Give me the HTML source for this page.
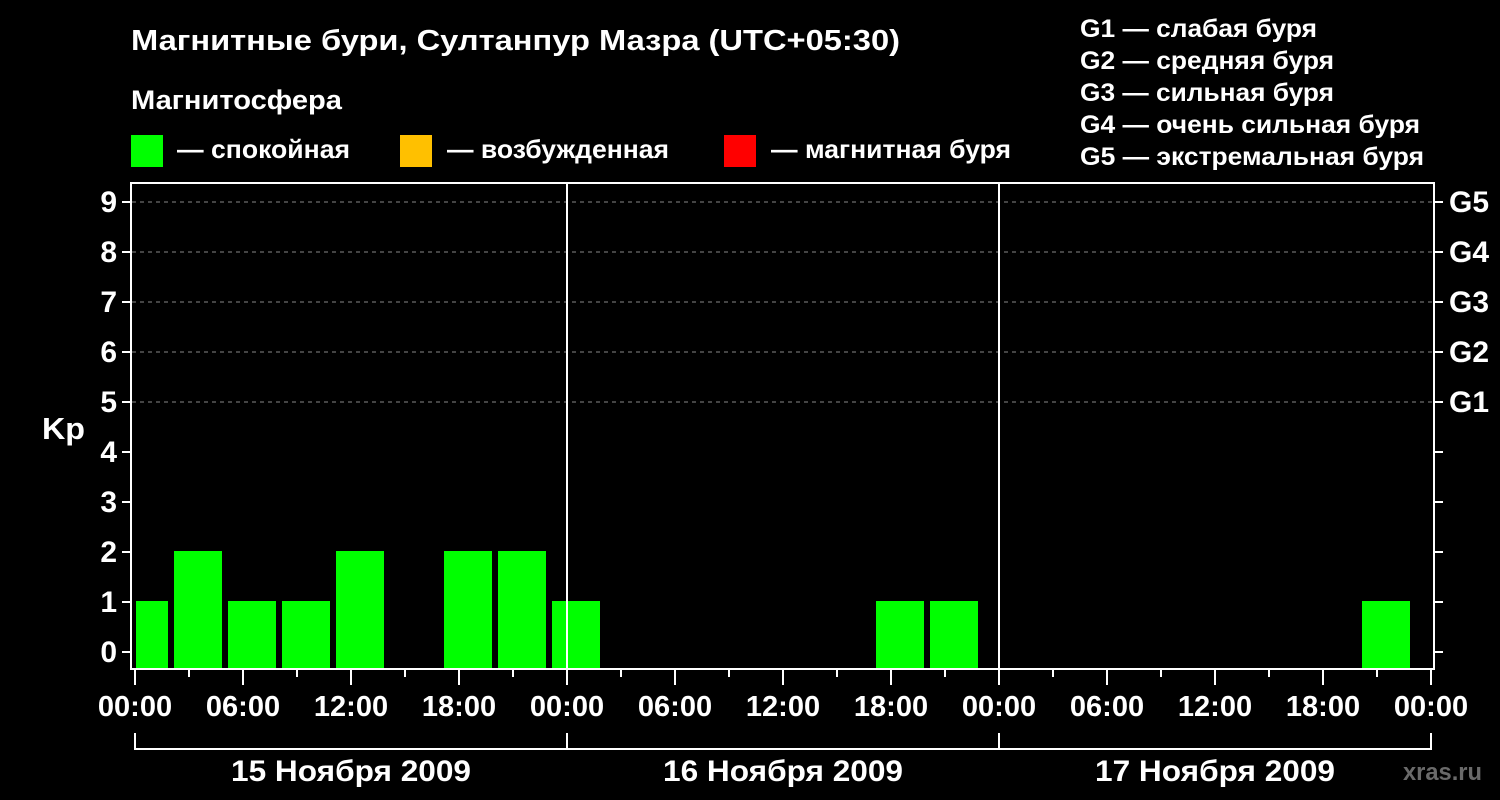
<!DOCTYPE html>
<html><head><meta charset="utf-8"><style>
html,body{margin:0;padding:0;background:#000;}
svg{display:block;}
text{font-family:"Liberation Sans",sans-serif;font-weight:bold;fill:#fff;}
</style></head><body>
<svg width="1500" height="800" xmlns="http://www.w3.org/2000/svg">
<rect width="1500" height="800" fill="#000"/>
<text x="131" y="50" font-size="29" textLength="769" lengthAdjust="spacingAndGlyphs">Магнитные бури, Султанпур Мазра (UTC+05:30)</text>
<text x="131" y="109" font-size="27" textLength="211" lengthAdjust="spacingAndGlyphs">Магнитосфера</text>
<rect x="131" y="135" width="32" height="32" fill="#00ff00"/>
<text x="177" y="158" font-size="26" textLength="173" lengthAdjust="spacingAndGlyphs">— спокойная</text>
<rect x="400" y="135" width="32" height="32" fill="#ffc000"/>
<text x="447" y="158" font-size="26" textLength="222" lengthAdjust="spacingAndGlyphs">— возбужденная</text>
<rect x="724" y="135" width="32" height="32" fill="#ff0000"/>
<text x="771" y="158" font-size="26" textLength="240" lengthAdjust="spacingAndGlyphs">— магнитная буря</text>
<g font-size="25">
<text x="1080" y="37" textLength="237" lengthAdjust="spacingAndGlyphs">G1 — слабая буря</text>
<text x="1080" y="69" textLength="254" lengthAdjust="spacingAndGlyphs">G2 — средняя буря</text>
<text x="1080" y="101" textLength="254" lengthAdjust="spacingAndGlyphs">G3 — сильная буря</text>
<text x="1080" y="133" textLength="340" lengthAdjust="spacingAndGlyphs">G4 — очень сильная буря</text>
<text x="1080" y="165" textLength="344" lengthAdjust="spacingAndGlyphs">G5 — экстремальная буря</text>
</g>
<g stroke="#888" stroke-width="1" stroke-dasharray="4,4">
<line x1="132" y1="202" x2="1432" y2="202"/><line x1="132" y1="252" x2="1432" y2="252"/>
<line x1="132" y1="302" x2="1432" y2="302"/><line x1="132" y1="352" x2="1432" y2="352"/>
<line x1="132" y1="402" x2="1432" y2="402"/>
</g>
<g fill="#00ff00">
<rect x="136" y="601" width="32" height="67"/>
<rect x="174" y="551" width="48" height="117"/>
<rect x="228" y="601" width="48" height="67"/>
<rect x="282" y="601" width="48" height="67"/>
<rect x="336" y="551" width="48" height="117"/>
<rect x="444" y="551" width="48" height="117"/>
<rect x="498" y="551" width="48" height="117"/>
<rect x="552" y="601" width="48" height="67"/>
<rect x="876" y="601" width="48" height="67"/>
<rect x="930" y="601" width="48" height="67"/>
<rect x="1362" y="601" width="48" height="67"/>
</g>
<g stroke="#fff" stroke-width="2" fill="none">
<path d="M131,183 H1434 V669 H131 Z"/>
<line x1="567" y1="183" x2="567" y2="669"/><line x1="999" y1="183" x2="999" y2="669"/>
<path d="M122,202h9M122,252h9M122,302h9M122,352h9M122,402h9M122,452h9M122,502h9M122,552h9M122,602h9M122,652h9"/>
<path d="M1434,202h9M1434,252h9M1434,302h9M1434,352h9M1434,402h9M1434,452h9M1434,502h9M1434,552h9M1434,602h9M1434,652h9"/>
<path d="M135,669v16M189,669v8M243,669v16M297,669v8M351,669v16M405,669v8M459,669v16M513,669v8M567,669v16M621,669v8M675,669v16M729,669v8M783,669v16M837,669v8M891,669v16M945,669v8M999,669v16M1053,669v8M1107,669v16M1161,669v8M1215,669v16M1269,669v8M1323,669v16M1377,669v8M1431,669v16"/>
<path d="M135,733V749H1431V733M567,733V749M999,733V749"/>
</g>
<g font-size="30" text-anchor="end">
<text x="117" y="212">9</text><text x="117" y="262">8</text><text x="117" y="312">7</text>
<text x="117" y="362">6</text><text x="117" y="412">5</text><text x="117" y="462">4</text>
<text x="117" y="512">3</text><text x="117" y="562">2</text><text x="117" y="612">1</text>
<text x="117" y="662">0</text>
</g>
<text x="42" y="439" font-size="31" textLength="43" lengthAdjust="spacingAndGlyphs">Kp</text>
<g font-size="30">
<text x="1449" y="212">G5</text><text x="1449" y="262">G4</text><text x="1449" y="312">G3</text>
<text x="1449" y="362">G2</text><text x="1449" y="412">G1</text>
</g>
<g font-size="29" text-anchor="middle">
<text x="135" y="716">00:00</text><text x="243" y="716">06:00</text><text x="351" y="716">12:00</text><text x="459" y="716">18:00</text>
<text x="567" y="716">00:00</text><text x="675" y="716">06:00</text><text x="783" y="716">12:00</text><text x="891" y="716">18:00</text>
<text x="999" y="716">00:00</text><text x="1107" y="716">06:00</text><text x="1215" y="716">12:00</text><text x="1323" y="716">18:00</text>
<text x="1431" y="716">00:00</text>
<text x="351" y="781" font-size="30" textLength="240" lengthAdjust="spacingAndGlyphs">15 Ноября 2009</text>
<text x="783" y="781" font-size="30" textLength="240" lengthAdjust="spacingAndGlyphs">16 Ноября 2009</text>
<text x="1215" y="781" font-size="30" textLength="240" lengthAdjust="spacingAndGlyphs">17 Ноября 2009</text>
</g>
<text x="1403" y="780" font-size="24" style="fill:#6a6a6a" textLength="79" lengthAdjust="spacingAndGlyphs">xras.ru</text>
</svg>
</body></html>
